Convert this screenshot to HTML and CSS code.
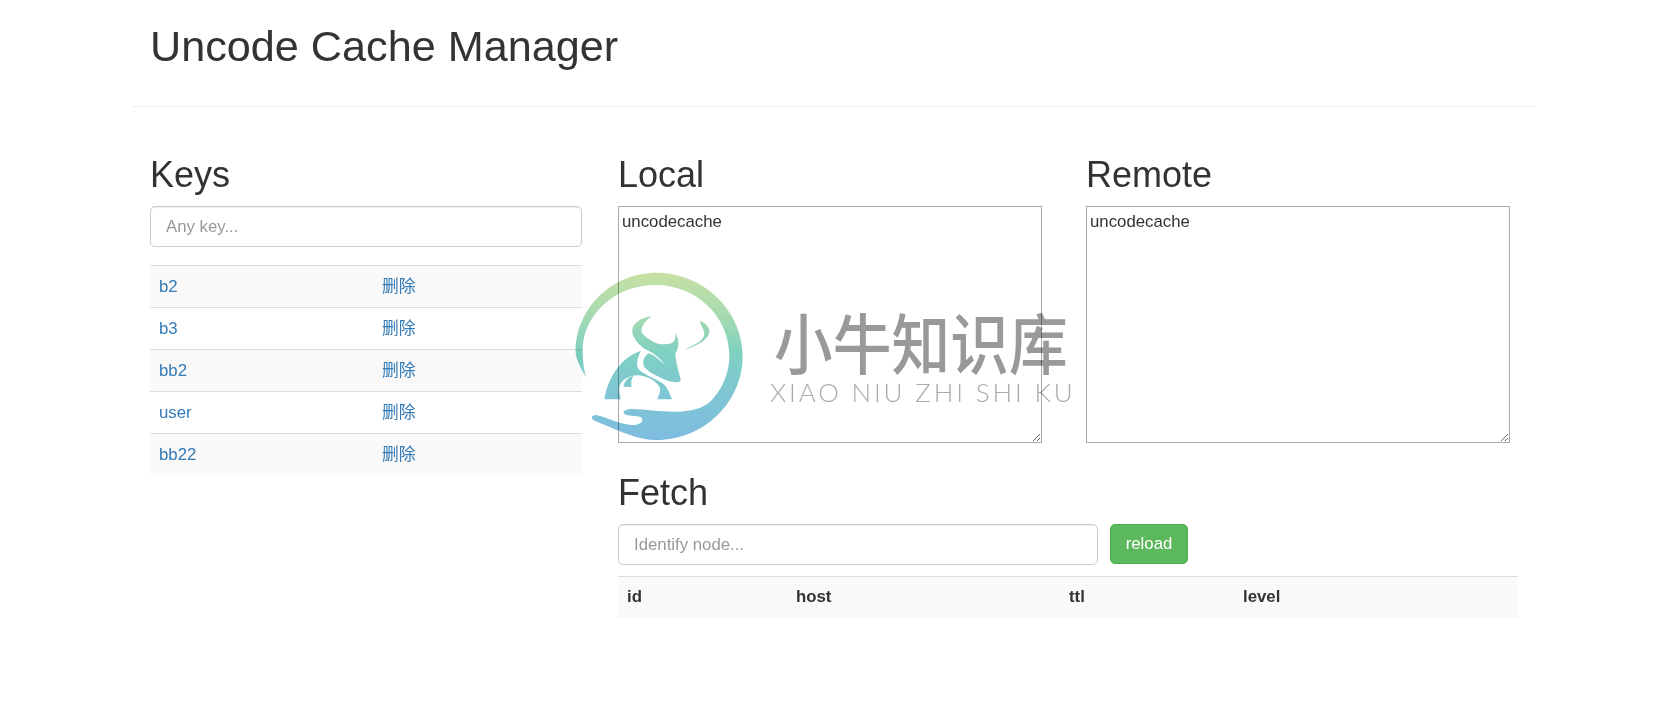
FILE: index.html
```html
<!DOCTYPE html>
<html lang="zh">
<head>
<meta charset="utf-8">
<title>Uncode Cache Manager</title>
<link rel="stylesheet" href="styles.css">
</head>
<body>
<div class="container">
  <header class="page-header"><h1>Uncode Cache Manager</h1></header>
  <main class="layout">
    <section class="keys">
      <h2>Keys</h2>
      <input class="field" type="text" placeholder="Any key...">
      <table class="grid keys-table">
        <colgroup><col class="key-col"><col></colgroup>
        <tbody>
          <tr><td><a href="#">b2</a></td><td><a href="#">删除</a></td></tr>
          <tr><td><a href="#">b3</a></td><td><a href="#">删除</a></td></tr>
          <tr><td><a href="#">bb2</a></td><td><a href="#">删除</a></td></tr>
          <tr><td><a href="#">user</a></td><td><a href="#">删除</a></td></tr>
          <tr><td><a href="#">bb22</a></td><td><a href="#">删除</a></td></tr>
        </tbody>
      </table>
    </section>
    <section class="detail">
      <div class="panes">
        <div class="pane">
          <h2>Local</h2>
          <textarea class="value">uncodecache</textarea>
        </div>
        <div class="pane">
          <h2>Remote</h2>
          <textarea class="value">uncodecache</textarea>
        </div>
      </div>
      <h2 class="fetch-title">Fetch</h2>
      <div class="fetch-form">
        <input class="field node-field" type="text" placeholder="Identify node...">
        <button class="btn" type="button">reload</button>
      </div>
      <table class="grid fetch-table">
        <colgroup><col class="c-id"><col class="c-host"><col class="c-ttl"><col></colgroup>
        <thead>
          <tr><th>id</th><th>host</th><th>ttl</th><th>level</th></tr>
        </thead>
      </table>
    </section>
  </main>
</div>
<div class="watermark" aria-hidden="true">
  <svg class="wm-logo" viewBox="0 0 570 540" width="190" height="180">
    <defs>
      <linearGradient id="wm" gradientUnits="userSpaceOnUse" x1="0" y1="8" x2="0" y2="510">
        <stop offset="0" stop-color="#c8e1a4"/>
        <stop offset=".25" stop-color="#a6dab0"/>
        <stop offset=".48" stop-color="#7fd1c2"/>
        <stop offset=".72" stop-color="#7fc6d3"/>
        <stop offset="1" stop-color="#7ebcdf"/>
      </linearGradient>
    </defs>
    <g fill="url(#wm)">
      <path d="M48 322C30 290 17 265 17 245C17 115 125 8 260 8C398 8 518 120 518 258C518 398 400 510 260 510C205 510 165 490 75 453C62 447 62 436 78 435C100 438 145 462 185 465C212 466 222 452 215 443C208 436 175 440 163 432C155 425 168 417 185 417C230 418 270 426 330 425C380 422 410 410 430 385C460 350 478 305 478 258C478 140 380 45 255 45C130 45 38 140 38 240C38 270 42 300 48 322Z"/>
      <path d="M245 139C215 142 185 160 187 185C188 205 205 222 226 238C245 246 270 262 284 285C270 272 255 256 236 250C222 258 216 276 222 290C232 302 248 312 262 318C278 328 298 336 320 337C328 337 332 334 332 328C326 305 316 270 316 250C324 240 332 212 316 189C318 203 314 216 304 220C290 224 270 224 256 218C240 210 222 198 216 188C210 172 226 152 245 139Z"/>
      <path d="M213 242C160 258 115 315 103 388L152 388C150 370 145 358 150 345C158 325 185 315 205 316C235 318 262 335 270 355C272 368 265 378 262 388L306 388C298 370 292 345 270 335C250 322 218 312 205 296C196 280 205 258 213 242Z"/>
      <path d="M190 317C172 322 162 336 160 350L185 351C182 338 184 328 190 317Z"/>
      <path d="M390 152C408 160 420 172 418 186C416 204 396 222 342 240C375 222 403 215 403 190C403 178 392 170 390 152Z"/>
    </g>
  </svg>
  <div class="wm-text">
    <div class="wm-cn">小牛知识库</div>
    <div class="wm-en">XIAO NIU ZHI SHI KU</div>
  </div>
</div>
</body>
</html>
```
FILE: styles.css
```css
* {
  box-sizing: border-box;
}

html,
body {
  margin: 0;
  background: #fff;
}

body {
  height: 710px;
  overflow: hidden;
  font-family: "Liberation Sans", "Noto Sans CJK SC", sans-serif;
  font-size: 16.8px;
  line-height: 24px;
  color: #333;
}

.container {
  width: 1404px;
  margin-left: 132px;
}

.page-header {
  height: 107px;
  padding: 23px 18px 0;
  border-bottom: 1px solid #eee;
}

h1,
h2 {
  margin: 0;
  font-weight: 400;
  line-height: 1.1;
  color: #333;
}

h1 {
  font-size: 43.2px;
}

h2 {
  font-size: 36px;
  margin-bottom: 11px;
}

.layout {
  display: grid;
  grid-template-columns: 468px 936px;
  padding-top: 48px;
}

.keys {
  padding: 0 18px;
}

.detail {
  padding: 0 18px;
}

.panes {
  display: grid;
  grid-template-columns: 468px 432px;
}

.value {
  display: block;
  width: 424px;
  height: 237px;
  margin: 0;
  padding: 5px 3px;
  border: 1px solid #a9a9a9;
  font: inherit;
  line-height: normal;
  color: #333;
  background: #fff;
}

.field {
  display: block;
  width: 100%;
  height: 41px;
  padding: 1px 15px 0;
  border: 1px solid #ccc;
  border-radius: 5px;
  box-shadow: inset 0 1px 1px rgba(0, 0, 0, .075);
  font: inherit;
  color: #555;
  background: #fff;
}

.field::placeholder {
  color: #999;
  opacity: 1;
}

.grid {
  width: 100%;
  border-collapse: collapse;
  table-layout: fixed;
}

.grid td,
.grid th {
  height: 42px;
  padding: 8px 9px;
  border-top: 1px solid #ddd;
  text-align: left;
  vertical-align: middle;
}

.grid td {
  padding-top: 9px;
  padding-bottom: 7px;
}

.grid th {
  height: 41.6px;
  padding-top: 7px;
  padding-bottom: 9px;
  font-weight: 700;
}

.keys-table {
  margin-top: 18px;
}

.keys-table tbody tr:nth-child(odd),
.fetch-table thead tr {
  background: #f9f9f9;
}

.key-col {
  width: 223px;
}

a {
  color: #337ab7;
  text-decoration: none;
}

.fetch-title {
  margin-top: 30.8px;
}

.fetch-form {
  display: flex;
  align-items: flex-start;
  gap: 12px;
}

.node-field {
  width: 480px;
}

.btn {
  width: 78px;
  height: 40px;
  padding: 0;
  border: 1px solid #4cae4c;
  border-radius: 5px;
  font: inherit;
  color: #fff;
  background: #5cb85c;
}

.fetch-table {
  margin-top: 11.4px;
}

.c-id {
  width: 169px;
}

.c-host {
  width: 273px;
}

.c-ttl {
  width: 174px;
}

.watermark {
  position: absolute;
  left: 570px;
  top: 270px;
  display: flex;
  width: 520px;
  height: 180px;
  mix-blend-mode: multiply;
  pointer-events: none;
}

.wm-logo {
  flex: none;
}

.wm-text {
  margin-left: 10px;
  padding-top: 32px;
}

.wm-cn {
  width: 330px;
  margin-left: 4px;
  font-family: "Noto Sans CJK SC", sans-serif;
  font-size: 66px;
  font-weight: 500;
  line-height: 76px;
  color: #999;
  white-space: nowrap;
  transform: scaleX(.89);
  transform-origin: left center;
}

.wm-en {
  padding-top: 1px;
  font-family: "Lato", sans-serif;
  font-size: 26px;
  font-weight: 300;
  line-height: 26px;
  letter-spacing: 2.85px;
  color: #aaa;
  white-space: nowrap;
}
```
